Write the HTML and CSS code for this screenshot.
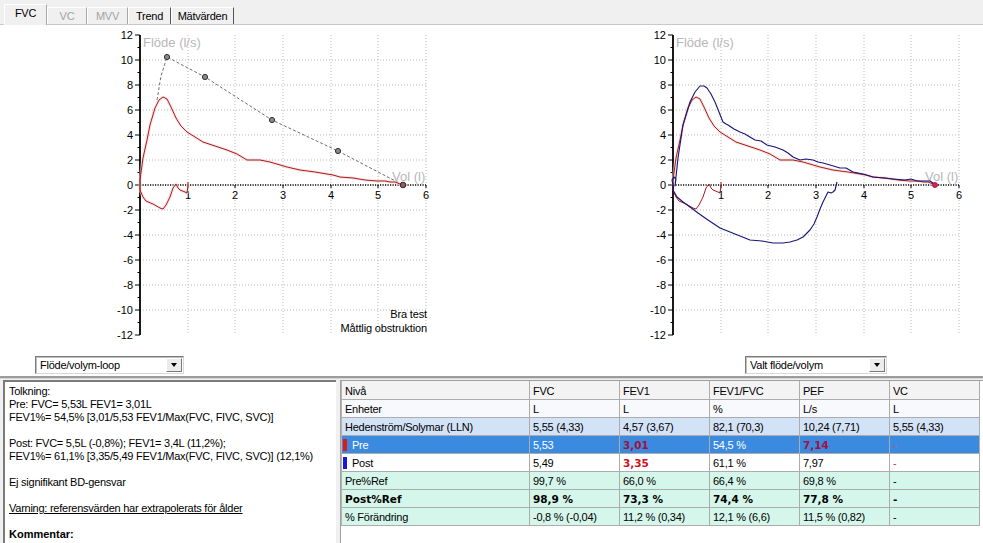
FILE: index.html
```html
<!DOCTYPE html>
<html lang="sv">
<head>
<meta charset="utf-8">
<title>Spirometri</title>
<link rel="stylesheet" href="styles.css">
</head>
<body>
<div class="tabs">
  <div class="tab sel">FVC</div>
  <div class="tab dis w40">VC</div>
  <div class="tab dis w41">MVV</div>
  <div class="tab w42">Trend</div>
  <div class="tab w63">Mätvärden</div>
</div>

<div class="charts">
  <div class="chart-col">
    <svg class="chart" width="491" height="325" viewBox="0 25 491 325">
      <path class="grid" d="M188 35V335M235 35V335M283 35V335M331 35V335M378 35V335M426 35V335M140 60H426M140 85H426M140 110H426M140 135H426M140 160H426M140 210H426M140 235H426M140 260H426M140 285H426M140 310H426"/>
      <path class="xaxis" d="M140 185H426"/>
      <path class="ticks" d="M188 185v3M235 185v3M283 185v3M331 185v3M378 185v3M426 185v3M135 35H140M135 60H140M135 85H140M135 110H140M135 135H140M135 160H140M135 185H140M135 210H140M135 235H140M135 260H140M135 285H140M135 310H140M135 335H140M137.5 47.5H140M137.5 72.5H140M137.5 97.5H140M137.5 122.5H140M137.5 147.5H140M137.5 172.5H140M137.5 197.5H140M137.5 222.5H140M137.5 247.5H140M137.5 272.5H140M137.5 297.5H140M137.5 322.5H140"/>
      <path class="yaxis" d="M140 35V335"/>
      <g class="ylab">
        <text x="133" y="39">12</text><text x="133" y="64">10</text><text x="133" y="89">8</text><text x="133" y="114">6</text><text x="133" y="139">4</text><text x="133" y="164">2</text><text x="133" y="189">0</text><text x="133" y="214">-2</text><text x="133" y="239">-4</text><text x="133" y="264">-6</text><text x="133" y="289">-8</text><text x="133" y="314">-10</text><text x="133" y="339">-12</text>
      </g>
      <g class="xlab">
        <text x="188" y="199">1</text><text x="235" y="199">2</text><text x="283" y="199">3</text><text x="331" y="199">4</text><text x="378" y="199">5</text><text x="426" y="199">6</text>
      </g>
      <text class="axtitle" x="143" y="47">Flöde (l/s)</text>
      <text class="axtitle" x="392" y="181">Vol (l)</text>
      <text class="note" x="427" y="318">Bra test</text>
      <text class="note" x="427" y="332">Måttlig obstruktion</text>
      <polyline class="pred" points="157,100 161,76 167,57 205,77 272,120 338,151 403,185"/>
      <polyline class="halo-r" points="140,185 140,180 143,158 147,140 150,125 155,108 159,100 163,97 167,99 171,107 176,118 181,126 187,132 195,137 203,142 215,146 227,150 237,154 247,160 255,160 260,160 270,162 287,167 300,170 315,172 333,175 340,177 353,178 365,180 377,181 385,181 390,182 395,182 400,184 403,185"/>
      <polyline class="halo-r" points="140,185 140,190 143,197 146,201 153,204 160,208 163,209 166,205 170,197 173,188 176,184 178,188 180,190 185,192 187,193 188,186 188,182"/>
      <polyline class="pre" points="140,185 140,180 143,158 147,140 150,125 155,108 159,100 163,97 167,99 171,107 176,118 181,126 187,132 195,137 203,142 215,146 227,150 237,154 247,160 255,160 260,160 270,162 287,167 300,170 315,172 333,175 340,177 353,178 365,180 377,181 385,181 390,182 395,182 400,184 403,185"/>
      <polyline class="pre" points="140,185 140,190 143,197 146,201 153,204 160,208 163,209 166,205 170,197 173,188 176,184 178,188 180,190 185,192 187,193 188,186 188,182"/>
      <g class="mark">
        <circle cx="167" cy="57" r="2.6"/><circle cx="205" cy="77" r="2.6"/><circle cx="272" cy="120" r="2.6"/><circle cx="338" cy="151" r="2.6"/>
      </g>
      <circle class="mark-end" cx="403" cy="185" r="2.8"/>
    </svg>
    <div class="dd-row dd-left">
      <div class="select w149"><span class="val">Flöde/volym-loop</span><span class="btn"></span></div>
    </div>
  </div>

  <div class="chart-col">
    <svg class="chart" width="492" height="325" viewBox="491 25 492 325">
      <path class="grid" d="M721 35V335M768 35V335M816 35V335M864 35V335M911 35V335M959 35V335M673 60H959M673 85H959M673 110H959M673 135H959M673 160H959M673 210H959M673 235H959M673 260H959M673 285H959M673 310H959"/>
      <path class="xaxis" d="M673 185H959"/>
      <path class="ticks" d="M721 185v3M768 185v3M816 185v3M864 185v3M911 185v3M959 185v3M668 35H673M668 60H673M668 85H673M668 110H673M668 135H673M668 160H673M668 185H673M668 210H673M668 235H673M668 260H673M668 285H673M668 310H673M668 335H673M670.5 47.5H673M670.5 72.5H673M670.5 97.5H673M670.5 122.5H673M670.5 147.5H673M670.5 172.5H673M670.5 197.5H673M670.5 222.5H673M670.5 247.5H673M670.5 272.5H673M670.5 297.5H673M670.5 322.5H673"/>
      <path class="yaxis" d="M673 35V335"/>
      <g class="ylab">
        <text x="666" y="39">12</text><text x="666" y="64">10</text><text x="666" y="89">8</text><text x="666" y="114">6</text><text x="666" y="139">4</text><text x="666" y="164">2</text><text x="666" y="189">0</text><text x="666" y="214">-2</text><text x="666" y="239">-4</text><text x="666" y="264">-6</text><text x="666" y="289">-8</text><text x="666" y="314">-10</text><text x="666" y="339">-12</text>
      </g>
      <g class="xlab">
        <text x="721" y="199">1</text><text x="768" y="199">2</text><text x="816" y="199">3</text><text x="864" y="199">4</text><text x="911" y="199">5</text><text x="959" y="199">6</text>
      </g>
      <text class="axtitle" x="676" y="47">Flöde (l/s)</text>
      <text class="axtitle" x="925" y="181">Vol (l)</text>
      <polyline class="halo-r" points="673,185 673,180 676,158 680,140 683,125 688,108 692,100 696,97 700,99 704,107 709,118 714,126 720,132 728,137 736,142 748,146 760,150 770,154 780,160 788,160 793,160 803,162 820,167 833,170 848,172 866,175 873,177 886,178 898,180 910,181 918,181 923,182 928,182 933,184 936,185"/>
      <polyline class="pre" points="673,185 673,180 676,158 680,140 683,125 688,108 692,100 696,97 700,99 704,107 709,118 714,126 720,132 728,137 736,142 748,146 760,150 770,154 780,160 788,160 793,160 803,162 820,167 833,170 848,172 866,175 873,177 886,178 898,180 910,181 918,181 923,182 928,182 933,184 936,185"/>
      <polyline class="pre" points="673,185 673,190 676,197 679,201 686,204 693,208 696,209 699,205 703,197 706,188 709,184 711,188 713,190 718,192 720,193 721,186 721,182"/>
      <polyline class="post" points="673,185 672,180 674,177 676,179 675,186 678,158 683,125 690,102 695,92 700,86 704,86 707,88 711,94 715,102 719,112 723,122 726,124 728,125 734,129 740,132 745,134 750,137 755,140 761,141 767,145 775,147 783,150 788,153 793,157 800,160 806,159 813,160 818,162 823,163 830,165 840,168 846,168 853,172 863,174 873,177 883,178 893,179 905,180 911,179 917,181 925,181 930,181 933,183 935,187"/>
      <polyline class="post" points="673,185 673,190 677,197 683,202 690,207 698,213 708,220 720,228 735,234 750,240 762,241 773,243 783,243 790,242 797,240 803,237 810,230 814,224 817,217 820,209 823,202 826,196 828,192 831,193 833,192 835,190 836,186 837,182"/>
      <circle class="mark-red" cx="935" cy="185" r="2.5"/>
    </svg>
    <div class="dd-row dd-right">
      <div class="select w142"><span class="val">Valt flöde/volym</span><span class="btn"></span></div>
    </div>
  </div>
</div>

<div class="divider"></div>

<div class="bottom">
  <div class="notes">
    <div class="line">Tolkning:</div>
    <div class="line">Pre: FVC= 5,53L FEV1= 3,01L</div>
    <div class="line">FEV1%= 54,5% [3,01/5,53 FEV1/Max(FVC, FIVC, SVC)]</div>
    <div class="line blank"></div>
    <div class="line">Post: FVC= 5,5L (-0,8%); FEV1= 3,4L (11,2%);</div>
    <div class="line">FEV1%= 61,1% [3,35/5,49 FEV1/Max(FVC, FIVC, SVC)] (12,1%)</div>
    <div class="line blank"></div>
    <div class="line">Ej signifikant BD-gensvar</div>
    <div class="line blank"></div>
    <div class="line warn">Varning: referensvärden har extrapolerats för ålder</div>
    <div class="line blank"></div>
    <div class="line strong">Kommentar:</div>
  </div>
  <div class="table-wrap">
    <table class="grid-table">
      <colgroup><col class="c-first"><col class="c-val"><col class="c-val"><col class="c-val"><col class="c-val"><col class="c-val"></colgroup>
      <tr class="r-head"><td>Nivå</td><td>FVC</td><td>FEV1</td><td>FEV1/FVC</td><td>PEF</td><td>VC</td></tr>
      <tr class="r-unit"><td>Enheter</td><td>L</td><td>L</td><td>%</td><td>L/s</td><td>L</td></tr>
      <tr class="r-ref"><td>Hedenström/Solymar (LLN)</td><td>5,55 (4,33)</td><td>4,57 (3,67)</td><td>82,1 (70,3)</td><td>10,24 (7,71)</td><td>5,55 (4,33)</td></tr>
      <tr class="r-sel"><td><span class="swatch red"></span>Pre</td><td>5,53</td><td class="flag">3,01</td><td>54,5 %</td><td class="flag">7,14</td><td class="dash">-</td></tr>
      <tr class="r-post"><td><span class="swatch blue"></span>Post</td><td>5,49</td><td class="flag">3,35</td><td>61,1 %</td><td>7,97</td><td class="dash">-</td></tr>
      <tr class="r-mint"><td>Pre%Ref</td><td>99,7 %</td><td>66,0 %</td><td>66,4 %</td><td>69,8 %</td><td>-</td></tr>
      <tr class="r-mint r-bold"><td>Post%Ref</td><td>98,9 %</td><td>73,3 %</td><td>74,4 %</td><td>77,8 %</td><td>-</td></tr>
      <tr class="r-mint"><td>% Förändring</td><td>-0,8 % (-0,04)</td><td>11,2 % (0,34)</td><td>12,1 % (6,6)</td><td>11,5 % (0,82)</td><td>-</td></tr>
    </table>
  </div>
</div>
</body>
</html>
```

FILE: styles.css
```css
html, body {
  margin: 0;
  padding: 0;
}
body {
  width: 983px;
  height: 543px;
  overflow: hidden;
  background: #ffffff;
  color: #000;
  font-family: "Liberation Sans", Arial, sans-serif;
  font-size: 11px;
  letter-spacing: -0.25px;
}

/* ---------- tabs ---------- */
.tabs {
  display: flex;
  align-items: flex-end;
  height: 24px;
  padding-left: 4px;
  background: #f0f0f0;
  border-bottom: 1px solid #c9c9c9;
}
.tab {
  box-sizing: border-box;
  height: 17px;
  line-height: 16px;
  text-align: center;
  border-top: 1px solid #ffffff;
  border-left: 1px solid #ffffff;
  border-right: 1px solid #8a8a8a;
  color: #000;
}
.tab.sel {
  width: 43px;
  height: 21px;
  line-height: 15px;
  padding-top: 1px;
  margin-bottom: -1px;
  background: #f0f0f0;
  border-right-color: #a8a8a8;
}
.tab.dis { color: #a3a3a3; border-right-color: #a8a8a8; }
.w40 { width: 40px; }
.w41 { width: 41px; }
.w42 { width: 43px; border-right-color: #555; }
.w63 { width: 63px; border-right-color: #555; }

/* ---------- charts ---------- */
.charts {
  display: grid;
  grid-template-columns: 491px 492px;
  height: 351px;
  background: #fff;
}
.chart-col {
  display: flex;
  flex-direction: column;
}
.chart { display: block; }
.chart .grid {
  fill: none;
  stroke: #b9b9b9;
  stroke-width: 1;
  stroke-dasharray: 1 2;
}
.chart .xaxis {
  fill: none;
  stroke: #000;
  stroke-width: 1.6;
  stroke-dasharray: 1.2 1.3;
}
.chart .yaxis {
  fill: none;
  stroke: #000;
  stroke-width: 1.8;
}
.chart .ticks {
  fill: none;
  stroke: #000;
  stroke-width: 1;
}
.chart text {
  font-family: "Liberation Sans", Arial, sans-serif;
  font-size: 11px;
  fill: #000;
}
.chart .ylab text { text-anchor: end; letter-spacing: 0; }
.chart .xlab text { text-anchor: middle; letter-spacing: 0; }
.chart .axtitle {
  font-size: 13px;
  fill: #b7b7b7;
  letter-spacing: 0;
}
.chart .note { text-anchor: end; letter-spacing: -0.15px; }
.chart .pred {
  fill: none;
  stroke: #6e6e6e;
  stroke-width: 1;
  stroke-dasharray: 3 2;
}
.chart .halo-r {
  fill: none;
  stroke: #f7d2d2;
  stroke-width: 3;
  stroke-linejoin: round;
  opacity: 0.6;
}
.chart .pre {
  fill: none;
  stroke: #a81c1c;
  stroke-width: 1;
  stroke-linejoin: round;
}
.chart .post {
  fill: none;
  stroke: #14147a;
  stroke-width: 1.1;
  stroke-linejoin: round;
}
.chart .mark circle {
  fill: #8a8a8a;
  stroke: #303030;
  stroke-width: 1;
}
.chart .mark-end {
  fill: #8a6060;
  stroke: #402020;
  stroke-width: 1;
}
.chart .mark-red {
  fill: #e02050;
  stroke: #901030;
  stroke-width: 0.8;
}

/* ---------- dropdowns ---------- */
.dd-row {
  box-sizing: border-box;
  height: 26px;
  padding-top: 6px;
  display: flex;
}
.dd-left { padding-left: 35px; }
.dd-right { padding-left: 254px; }
.select {
  box-sizing: border-box;
  height: 18px;
  display: flex;
  align-items: stretch;
  background: #fff;
  border: 1px solid;
  border-color: #7a7a7a #d8d8d8 #d8d8d8 #7a7a7a;
  box-shadow: inset 1px 1px 0 #c0c0c0;
}
.w149 { width: 149px; }
.w142 { width: 142px; }
.select .val {
  flex: 1;
  padding-left: 4px;
  line-height: 16px;
}
.select .btn {
  box-sizing: border-box;
  width: 16px;
  margin: 1px 1px 1px 0;
  background: #ececec;
  border: 1px solid;
  border-color: #ffffff #7a7a7a #7a7a7a #ffffff;
  display: flex;
  align-items: center;
  justify-content: center;
}
.select .btn::after {
  content: "";
  width: 0;
  height: 0;
  border-left: 3.5px solid transparent;
  border-right: 3.5px solid transparent;
  border-top: 4px solid #000;
}

/* ---------- divider ---------- */
.divider {
  height: 2px;
  background: #9c9c9c;
  border-bottom: 1px solid #d6d6d6;
}

/* ---------- bottom ---------- */
.bottom {
  display: flex;
  height: 164px;
  padding-top: 1px;
  box-sizing: border-box;
  background: #f0f0f0;
}
.notes {
  box-sizing: border-box;
  width: 333px;
  margin-left: 3px;
  padding: 3px 0 0 4px;
  background: #fff;
  border-top: 2px solid #7a7a7a;
  border-left: 2px solid #7a7a7a;
  line-height: 13px;
  white-space: nowrap;
}
.notes .line { height: 13px; }
.notes .warn { text-decoration: underline; }
.notes .strong { font-weight: bold; letter-spacing: 0; }

.table-wrap {
  flex: 1;
  margin-left: 4px;
  background: #fff;
  border-top: 1px solid #a0a0a0;
  border-left: 1px solid #a0a0a0;
}
.grid-table {
  table-layout: fixed;
  width: 639px;
  border-collapse: separate;
  border-spacing: 0;
  border-left: 1px solid #b4b4b4;
}
.c-first { width: 188px; }
.c-val { width: 90px; }
.grid-table td {
  box-sizing: border-box;
  height: 18px;
  padding: 1px 0 0 3px;
  border-right: 1px solid #acacac;
  border-bottom: 1px solid #acacac;
  white-space: nowrap;
  overflow: hidden;
  vertical-align: middle;
  line-height: 14px;
}
.r-head td { height: 19px; background: #f3f3f3; }
.r-unit td { background: #f8f9fc; }
.r-ref td { background: #d3e3f7; }
.r-sel td { background: #3a8be0; color: #ffffff; }
.r-post td { background: #ffffff; }
.r-mint td { background: #d5f6eb; }
.r-bold td {
  font-family: "DejaVu Sans", Verdana, sans-serif;
  font-weight: bold;
  font-size: 10.5px;
  letter-spacing: 0;
}
.grid-table td.flag {
  font-family: "DejaVu Sans", Verdana, sans-serif;
  font-weight: bold;
  font-size: 10.5px;
  letter-spacing: 0;
  color: #d01020;
}
.r-sel td.flag { color: #a8103a; }
.grid-table td.dash { color: #d83030; }
.r-sel td.dash { color: #f04848; }
.swatch {
  display: inline-block;
  width: 4px;
  height: 12px;
  margin: 0 5px 0 -2px;
  vertical-align: -2px;
}
.swatch.red { background: #e01818; }
.swatch.blue { background: #1818d8; }
```
